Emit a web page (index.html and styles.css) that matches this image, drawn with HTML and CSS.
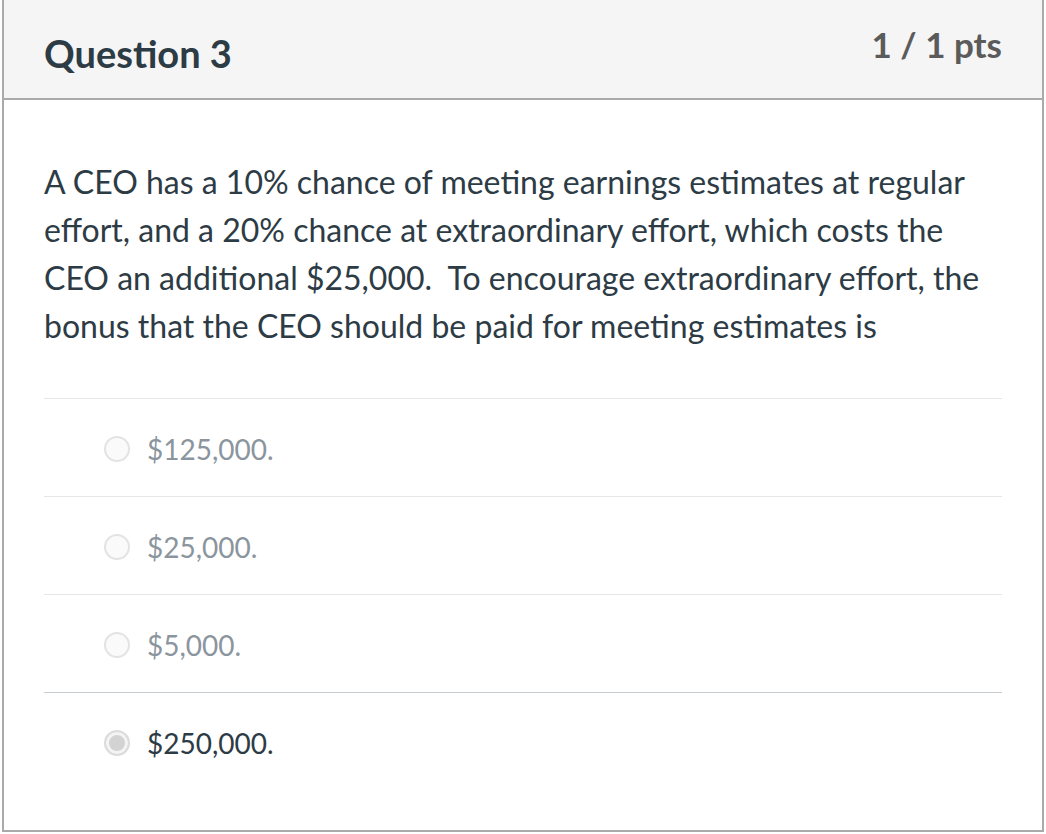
FILE: index.html
```html
<!DOCTYPE html>
<html>
<head>
<meta charset="utf-8">
<link rel="stylesheet" href="styles.css">
</head>
<body>
<div class="question">
  <div class="header">
    <h2 class="title">Question 3</h2>
    <div class="pts">1 / 1 pts</div>
  </div>
  <div class="content">
    <p class="text">A CEO has a 10% chance of meeting earnings estimates at regular effort, and a 20% chance at extraordinary effort, which costs the CEO an additional $25,000.&nbsp; To encourage extraordinary effort, the bonus that the CEO should be paid for meeting estimates is</p>
    <div class="answers">
      <div class="answer">
        <span class="radio"></span>
        <span class="label">$125,000.</span>
      </div>
      <div class="answer">
        <span class="radio"></span>
        <span class="label">$25,000.</span>
      </div>
      <div class="answer">
        <span class="radio"></span>
        <span class="label">$5,000.</span>
      </div>
      <div class="answer selected">
        <span class="radio"></span>
        <span class="label">$250,000.</span>
      </div>
    </div>
  </div>
</div>
</body>
</html>
```
FILE: styles.css
```css
* { box-sizing: border-box; }
html, body { margin: 0; padding: 0; background: #fff; }
body { font-family: Lato, "Noto Sans", sans-serif; color: #2d3b45; }

.question {
  margin-left: 2px;
  width: 1042px;
  height: 832px;
  border: 2px solid #aaaaaa;
  border-top: none;
  display: flex;
  flex-direction: column;
}

.header {
  height: 100px;
  background: #f5f5f5;
  border-bottom: 2px solid #aaaaaa;
  display: flex;
  align-items: center;
  justify-content: space-between;
  padding: 0 40px 0 40px;
}

.title {
  margin: 0;
  font-size: 38px;
  font-weight: 700;
  color: #2d3b45;
  padding-top: 8px;
}

.pts {
  font-size: 35px;
  font-weight: 700;
  color: #5b5b5b;
  padding-bottom: 10px;
}

.content {
  padding: 58px 40px 0 40px;
}

.text {
  margin: 0 0 48px 0;
  font-size: 32px;
  line-height: 48px;
}

.answer {
  border-top: 1px solid #e6e6e6;
  height: 98px;
  display: flex;
  align-items: center;
  padding-left: 60px;
  padding-top: 2px;
}

.answer:last-child { border-top-color: #c7cdd1; }

.radio {
  width: 26px;
  height: 26px;
  border-radius: 50%;
  border: 2px solid #e3e3e3;
  background: #fafafa;
  margin-right: 17px;
  flex: none;
}

.selected .radio {
  border: 2px solid #dcdcdc;
  background: #d3d3d3;
  box-shadow: inset 0 0 0 3px #f4f4f4;
}

.label {
  font-size: 28px;
  color: #8b959e;
}

.selected .label { color: #2d3b45; }
```
